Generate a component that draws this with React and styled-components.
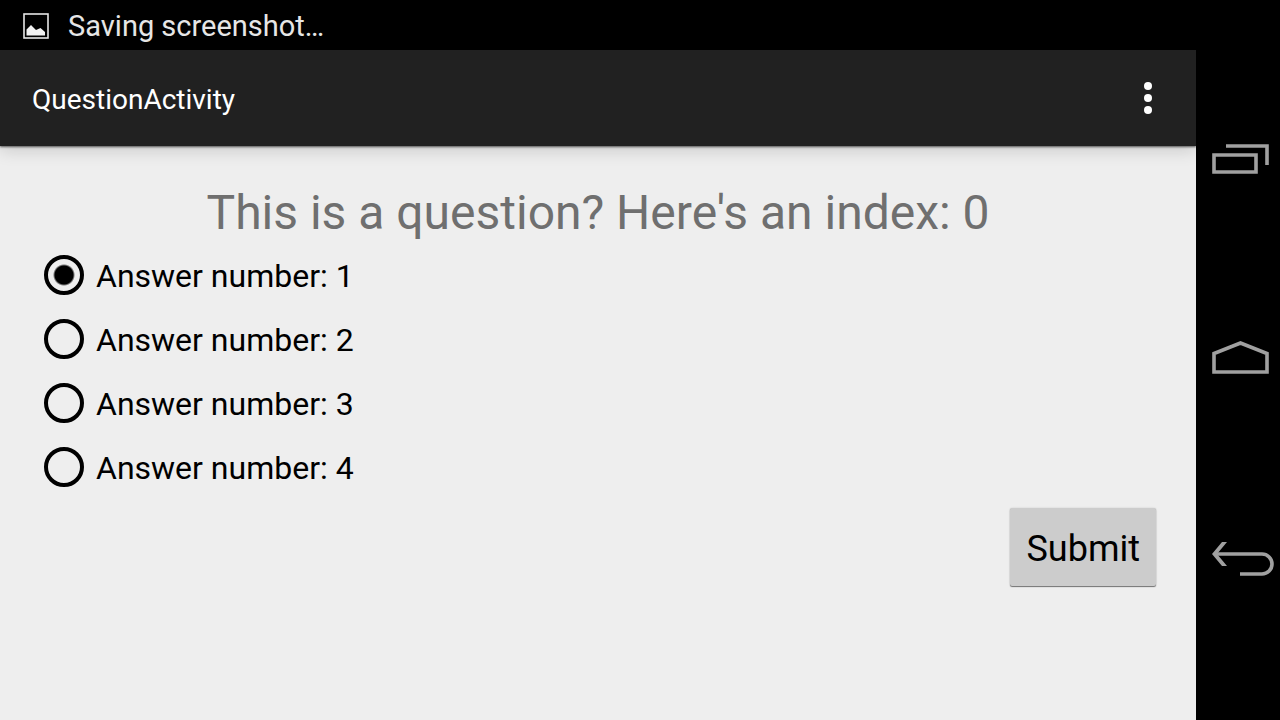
import React, { useState } from "react";
import styled, { createGlobalStyle } from "styled-components";

const Global = createGlobalStyle`
  * { box-sizing: border-box; }
  body { margin: 0; background: #eeeeee; font-family: Roboto, sans-serif; }
`;

const Screen = styled.div`
  display: grid;
  grid-template-columns: minmax(0, 1fr) 84px;
  grid-template-rows: auto 1fr;
  min-height: 100vh;
`;

const StatusBar = styled.header`
  display: flex;
  align-items: center;
  gap: 18px;
  padding: 2px 22px 0;
  background: #000;
  color: #e6e6e6;
  font-size: 29px;
  line-height: 48px;
`;

const Activity = styled.div`
  grid-row: 2;
  display: flex;
  flex-direction: column;
  background: #eeeeee;
`;

const ActionBar = styled.div`
  display: flex;
  align-items: center;
  justify-content: space-between;
  height: 96px;
  padding: 0 32px;
  background: #212121;
  box-shadow: 0 1px 2px rgba(0, 0, 0, 0.6), 0 4px 16px rgba(0, 0, 0, 0.16);
`;

const Title = styled.h1`
  margin: 0;
  padding-top: 4px;
  color: #fff;
  font-size: 28px;
  font-weight: 400;
  line-height: 36px;
`;

const IconButton = styled.button`
  display: flex;
  padding: 0;
  border: 0;
  background: none;
  color: ${(p) => p.$color};
`;

const Form = styled.form`
  display: flex;
  flex-direction: column;
  padding: 37px 40px 32px;
`;

const Question = styled.h2`
  margin: 0;
  color: #6f6f6f;
  font-size: 48px;
  font-weight: 400;
  line-height: 60px;
  text-align: center;
`;

const Answers = styled.div`
  display: flex;
  flex-direction: column;
  align-items: flex-start;
`;

const Answer = styled.label`
  display: flex;
  align-items: center;
  gap: 12px;
  height: 64px;
  padding: 0 4px;
  color: #000;
  font-size: 32px;
`;

const AnswerText = styled.span`
  padding-top: 2px;
`;

const Radio = styled.input`
  appearance: none;
  width: 40px;
  height: 40px;
  margin: 0;
  border: 4px solid #000;
  border-radius: 50%;
  &:checked {
    background: radial-gradient(circle, #000 9px, transparent 11px);
  }
`;

const Submit = styled.button`
  align-self: flex-end;
  height: 78px;
  margin-top: 9px;
  padding: 4px 16px 0;
  border: 0;
  border-radius: 2px;
  background: #cccccc;
  color: #000;
  font: 400 36px Roboto, sans-serif;
  box-shadow: 0 1px 1px rgba(0, 0, 0, 0.5), 0 0 2px rgba(0, 0, 0, 0.15);
`;

const NavBar = styled.nav`
  grid-column: 2;
  grid-row: 1 / 3;
  display: flex;
  flex-direction: column;
  align-items: center;
  justify-content: space-around;
  padding: 60px 0;
  background: #000;
`;

const NavIcon = styled.svg.attrs({
  width: 84,
  height: 40,
  viewBox: "0 0 84 40",
  fill: "none",
  stroke: "currentColor",
  strokeWidth: 3.6,
})`
  display: block;
`;

export default function App() {
  const [answer, setAnswer] = useState(1);
  return (
    <Screen>
      <Global />
      <StatusBar>
        <svg width="28" height="28" viewBox="0 0 28 28" fill="none">
          <rect x="2" y="2" width="24" height="24" stroke="#e6e6e6" strokeWidth="1.6" />
          <path d="M4.5 23.5V17.5L9 13L14 18L18.5 16L23 20V23.5Z" fill="#f2f2f2" />
        </svg>
        <span>Saving screenshot…</span>
      </StatusBar>
      <Activity>
        <ActionBar>
          <Title>QuestionActivity</Title>
          <IconButton $color="#fff" aria-label="More options">
            <svg width="32" height="32" viewBox="0 0 32 32" fill="currentColor">
              <circle cx="16" cy="4" r="4" />
              <circle cx="16" cy="16" r="4" />
              <circle cx="16" cy="28" r="4" />
            </svg>
          </IconButton>
        </ActionBar>
        <Form onSubmit={(e) => e.preventDefault()}>
          <Question>This is a question? Here's an index: 0</Question>
          <Answers role="radiogroup" aria-label="Answers">
            {[1, 2, 3, 4].map((n) => (
              <Answer key={n}>
                <Radio type="radio" name="answer" checked={answer === n} onChange={() => setAnswer(n)} />
                <AnswerText>Answer number: {n}</AnswerText>
              </Answer>
            ))}
          </Answers>
          <Submit type="submit">Submit</Submit>
        </Form>
      </Activity>
      <NavBar>
        <IconButton $color="#a0a0a0" aria-label="Recent apps">
          <NavIcon>
            <path d="M18 15H60V32H18ZM30 6H71V25" />
          </NavIcon>
        </IconButton>
        <IconButton $color="#a0a0a0" aria-label="Home">
          <NavIcon>
            <path d="M18 32V13.5L44.5 3L71 13.5V32Z" />
          </NavIcon>
        </IconButton>
        <IconButton $color="#a0a0a0" aria-label="Back">
          <NavIcon>
            <path d="M19 14H66A10 10 0 0 1 66 34H44" />
            <path d="M16 14L26 2H31L21 14L31 26H26Z" fill="currentColor" stroke="none" />
          </NavIcon>
        </IconButton>
      </NavBar>
    </Screen>
  );
}
